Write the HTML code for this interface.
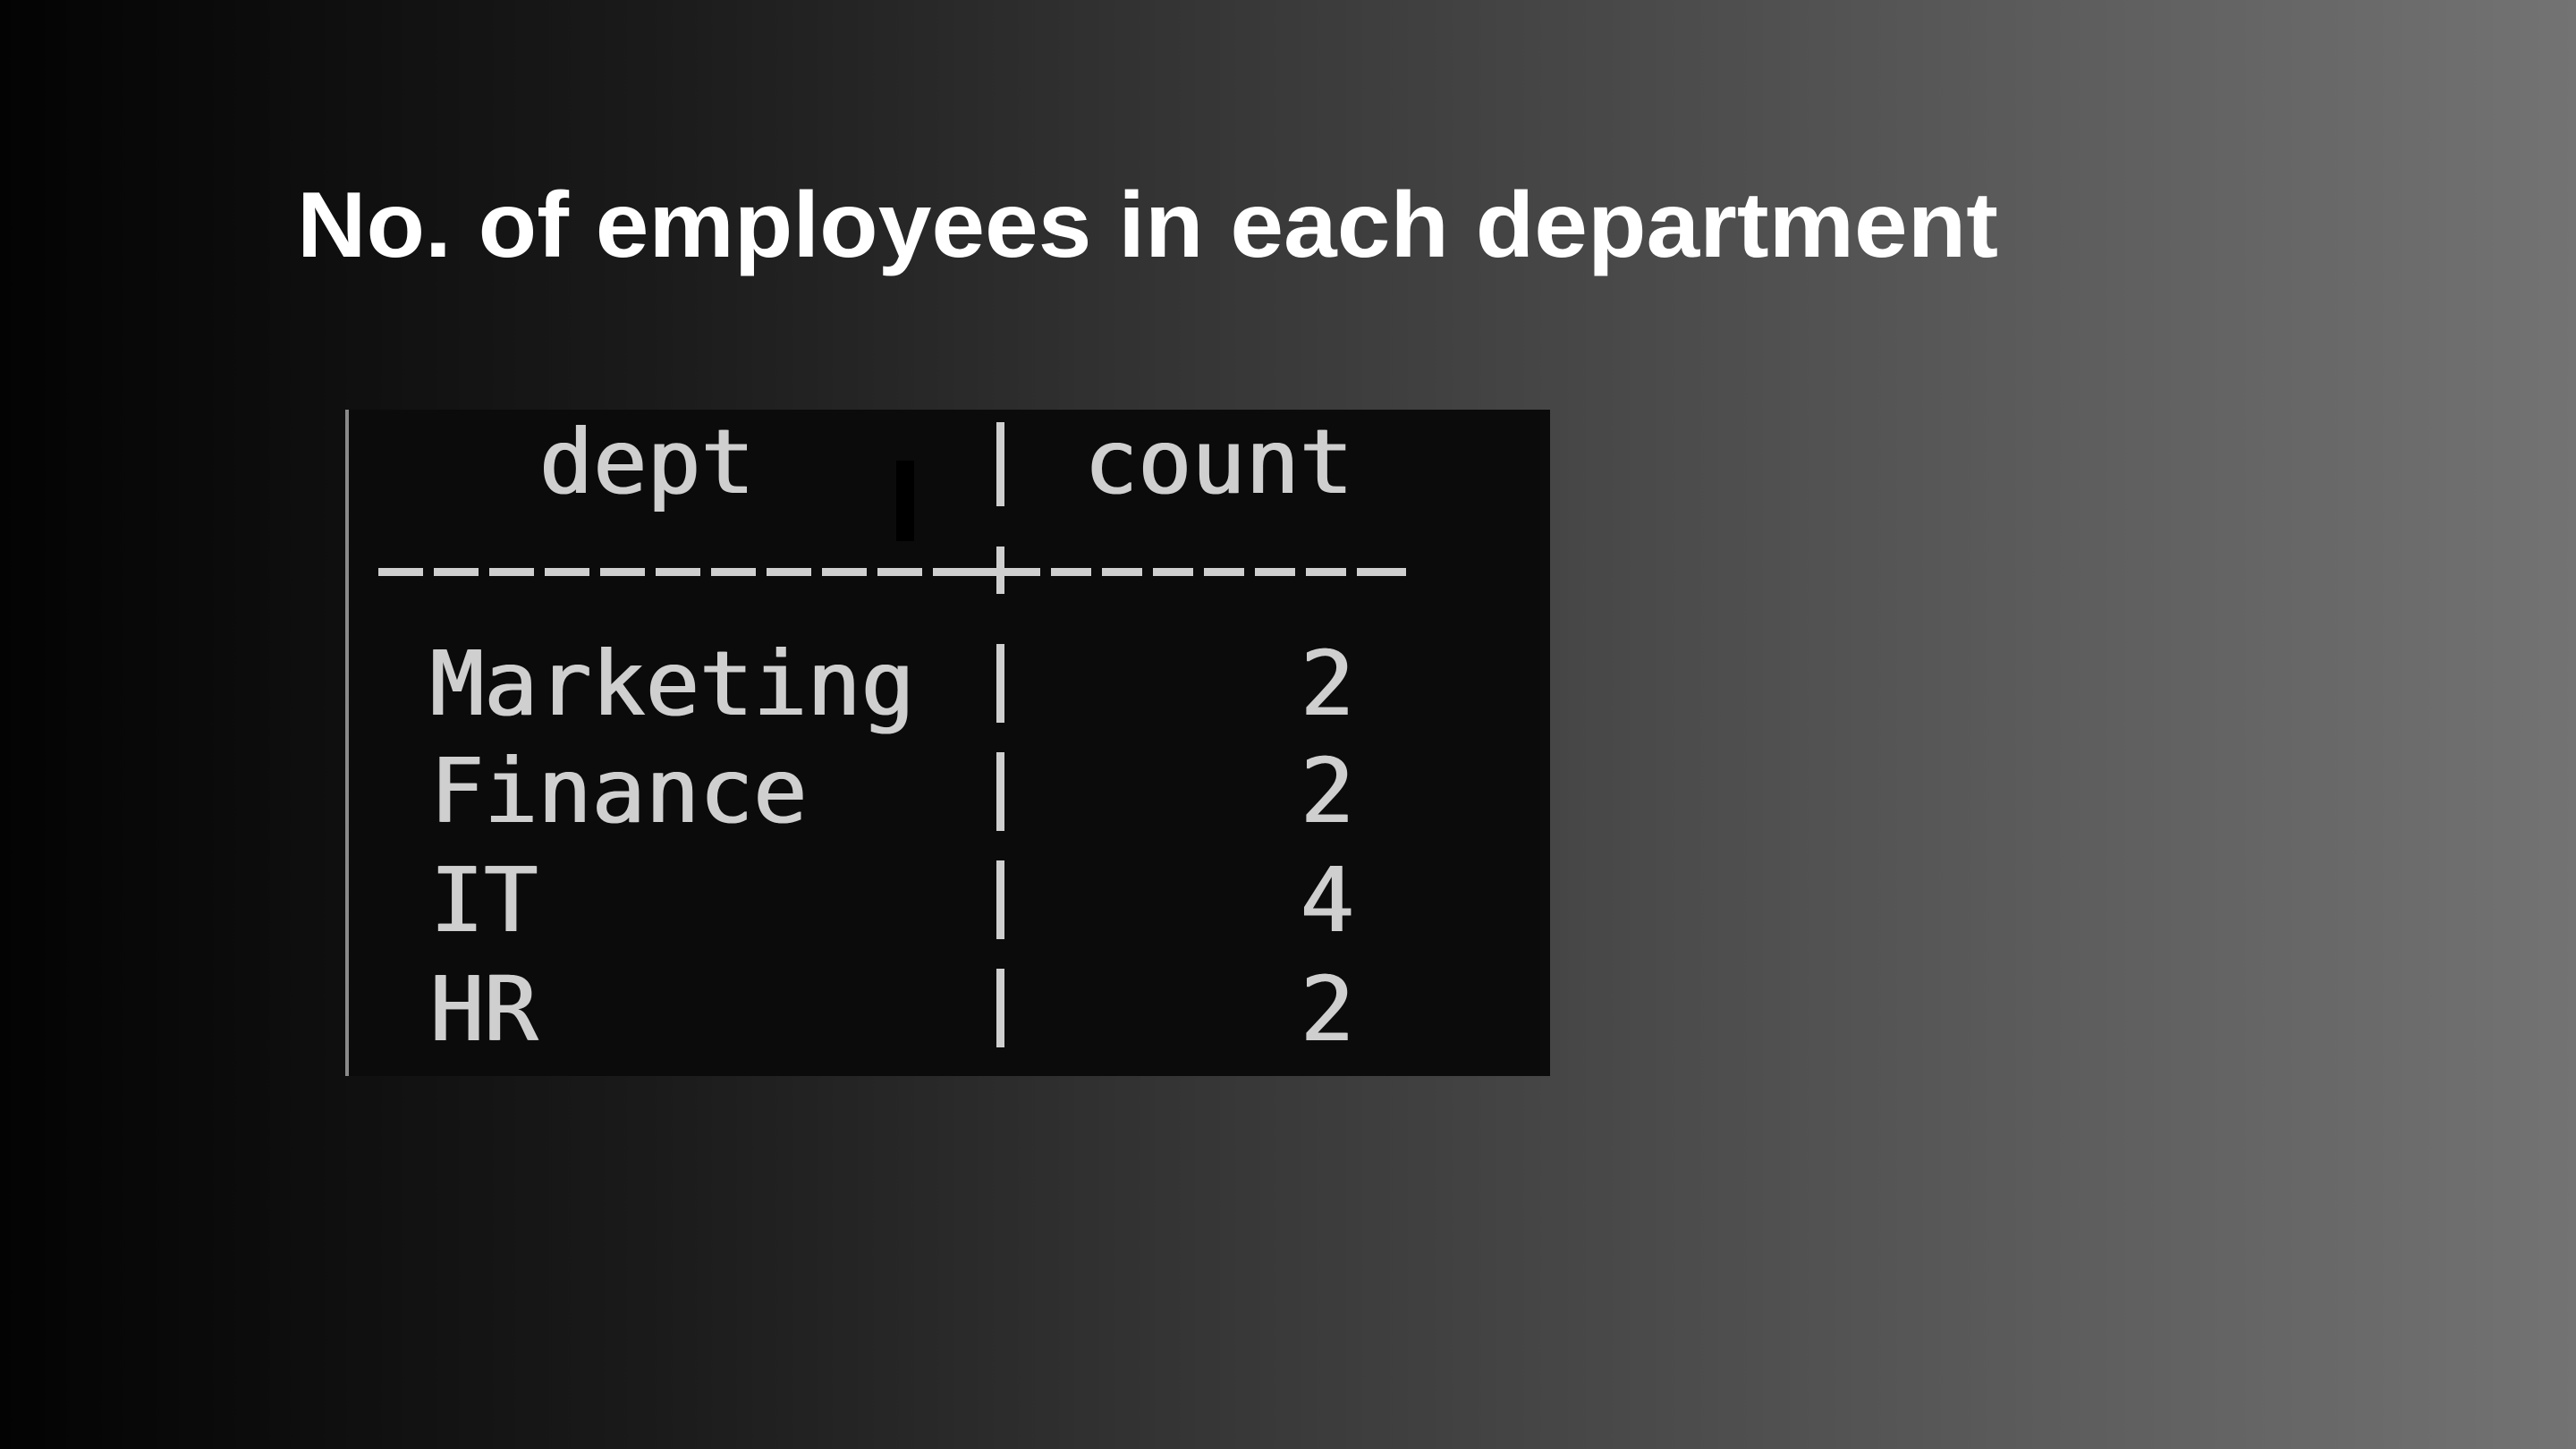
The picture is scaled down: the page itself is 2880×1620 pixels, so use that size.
<!DOCTYPE html>
<html><head><meta charset="utf-8"><style>
html,body{margin:0;padding:0}
body{width:2880px;height:1620px;position:relative;overflow:hidden;background:linear-gradient(90deg,#030303 0%,#1a1a1a 25%,#3a3a3a 50%,#575757 75%,#737373 100%)}
.term{position:absolute;left:386px;top:458px;width:1347px;height:745px;background:#0b0b0b;overflow:hidden}
.bl{position:absolute;left:386px;top:458px;width:4px;height:745px;background:#8a8a8a}
.t{position:absolute;font-family:"DejaVu Sans Mono","Liberation Mono",monospace;font-size:100px;line-height:100px;color:#cfcfcf;white-space:pre;text-shadow:1px 0 0 #cfcfcf,-1px 0 0 #cfcfcf}
.blob{position:absolute;left:1002px;top:515px;width:20px;height:90px;background:#000}
.p{position:absolute;left:1114px;width:9px;background:#cfcfcf}
.d{position:absolute;top:635px;height:9px;background:#cfcfcf}
</style></head><body>
<svg style="position:absolute;left:0;top:0" width="2880" height="400">
<text x="332" y="287" textLength="1902" lengthAdjust="spacingAndGlyphs" font-family="Liberation Sans, sans-serif" font-weight="bold" font-size="104" fill="#ffffff">No. of employees in each department</text>
</svg>
<div class="term"></div>
<div class="bl"></div>
<div class="blob"></div>
<div class="t" style="left:603px;top:467px">dept</div>
<div class="t" style="left:1212px;top:467px">count</div>
<div class="p" style="top:472px;height:94px"></div>
<div class="p" style="top:720px;height:88px"></div>
<div class="p" style="top:841px;height:88px"></div>
<div class="p" style="top:962px;height:88px"></div>
<div class="p" style="top:1083px;height:88px"></div>
<div class="p" style="top:611px;height:53px"></div>
<div class="d" style="left:423px;width:50px"></div>
<div class="d" style="left:485px;width:50px"></div>
<div class="d" style="left:547px;width:50px"></div>
<div class="d" style="left:609px;width:50px"></div>
<div class="d" style="left:671px;width:50px"></div>
<div class="d" style="left:733px;width:50px"></div>
<div class="d" style="left:795px;width:50px"></div>
<div class="d" style="left:857px;width:50px"></div>
<div class="d" style="left:919px;width:50px"></div>
<div class="d" style="left:981px;width:50px"></div>
<div class="d" style="left:1043px;width:80px"></div>
<div class="d" style="left:1123px;width:40px"></div>
<div class="d" style="left:1175px;width:45px"></div>
<div class="d" style="left:1232px;width:45px"></div>
<div class="d" style="left:1289px;width:45px"></div>
<div class="d" style="left:1346px;width:45px"></div>
<div class="d" style="left:1403px;width:45px"></div>
<div class="d" style="left:1460px;width:45px"></div>
<div class="d" style="left:1517px;width:55px"></div>
<div class="t" style="left:481px;top:715px">Marketing</div>
<div class="t" style="left:481px;top:835px">Finance</div>
<div class="t" style="left:481px;top:957px">IT</div>
<div class="t" style="left:481px;top:1079px">HR</div>
<div class="t" style="left:1454px;top:715px">2</div>
<div class="t" style="left:1454px;top:835px">2</div>
<div class="t" style="left:1454px;top:957px">4</div>
<div class="t" style="left:1454px;top:1079px">2</div>
</body></html>
